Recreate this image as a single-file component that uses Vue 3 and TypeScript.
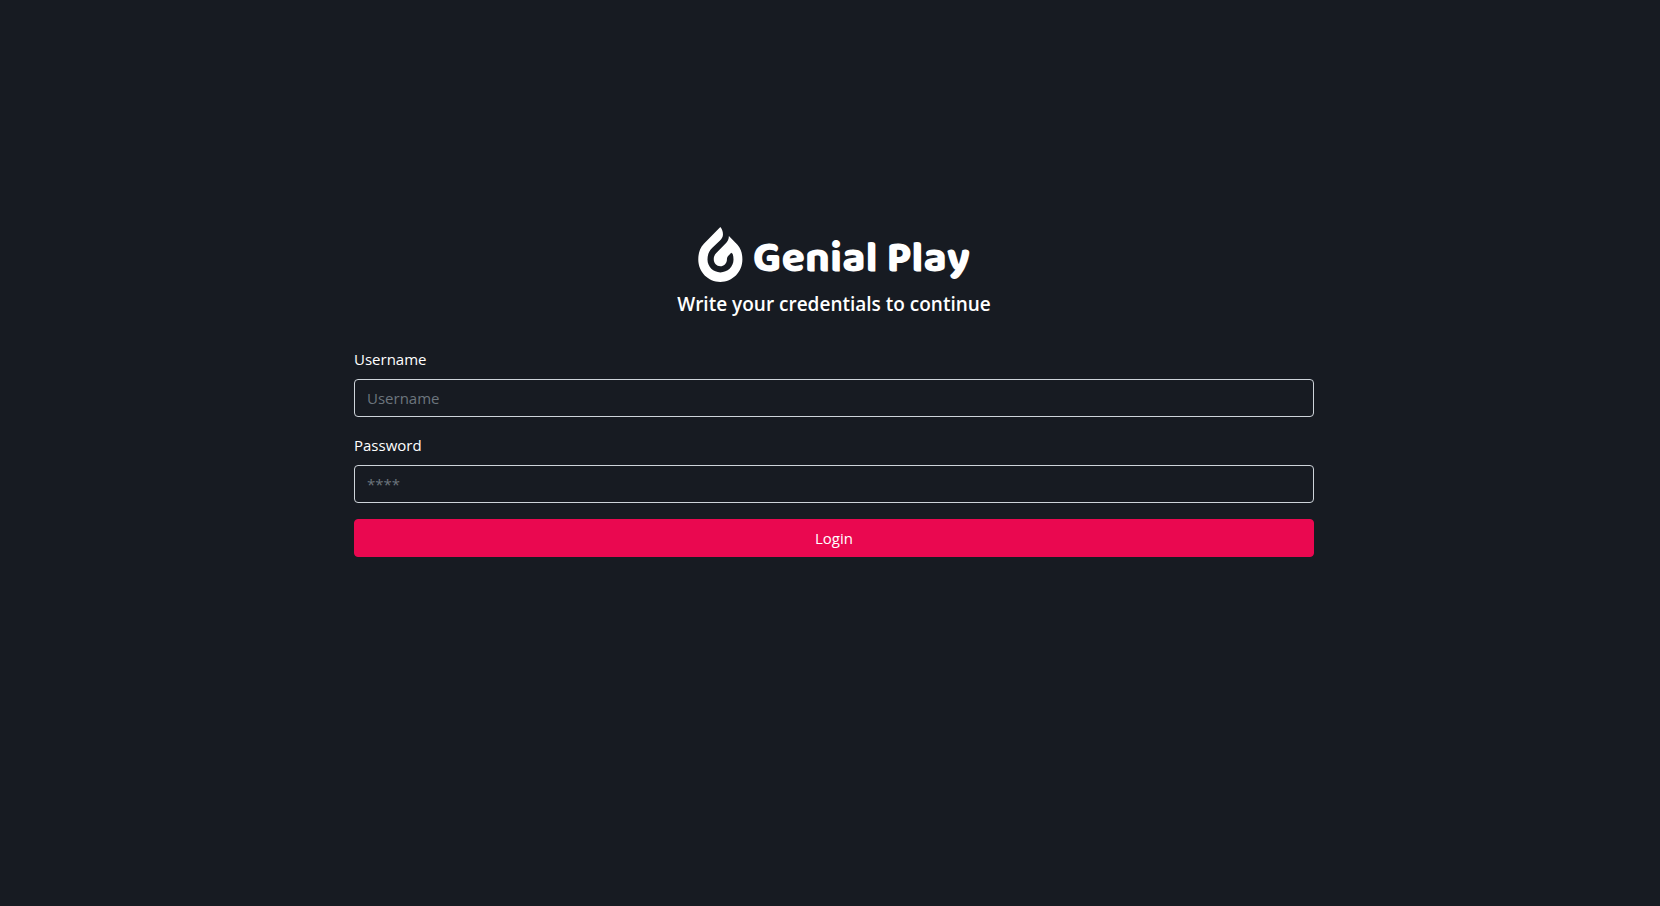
<script setup lang="ts">
import { ref } from 'vue'

const username = ref('')
const password = ref('')
</script>

<template>
  <main class="page">
    <section class="login">
      <header class="head">
        <div class="brand">
          <svg class="flame" viewBox="24 20 135 167" aria-hidden="true">
            <path
              d="M91 20C97 27 99 35 99 43C99 50 95 56 90 61L66 84C56 94 52 105 52 119C52 141 70 158 91 158C113 158 131 141 131 119C131 112 130 106 128 101L124 98L114 109C111 113 111 117 111 120C110 131 102 139 91 139C80 139 71 130 71 118C71 111 73 105 78 100L107 70C113 64 117 57 117 47L143 74C154 86 158 102 158 119C158 157 128 187 91 187C54 187 24 157 24 119C24 101 28 85 41 71Z"
            />
          </svg>
          <span class="wordmark">Genial Play</span>
        </div>
        <h1 class="title">Write your credentials to continue</h1>
      </header>
      <form class="form" @submit.prevent>
        <div class="field">
          <label for="username">Username</label>
          <input id="username" v-model="username" type="text" placeholder="Username" />
        </div>
        <div class="field">
          <label for="password">Password</label>
          <input id="password" v-model="password" type="password" placeholder="****" />
        </div>
        <button type="submit">Login</button>
      </form>
    </section>
  </main>
</template>

<style>
body {
  margin: 0;
  background: #171b22;
}
</style>

<style scoped>
.page {
  box-sizing: border-box;
  min-height: 100vh;
  padding: 0 0 122px 8px;
  display: flex;
  align-items: center;
  justify-content: center;
  background: #171b22;
  color: #fff;
  font-family: "Segoe UI", "Open Sans", "Noto Sans", sans-serif;
  font-size: 15px;
  line-height: 24px;
}
.login {
  width: 100%;
  max-width: 960px;
}
.head {
  display: flex;
  flex-direction: column;
  align-items: center;
  margin-bottom: 31px;
}
.brand {
  display: flex;
  align-items: center;
  gap: 10px;
  height: 55px;
}
.flame {
  width: 45px;
  height: 55px;
  fill: #fff;
}
.wordmark {
  font-family: "Baloo 2", "Open Sans", sans-serif;
  font-size: 43px;
  font-weight: 800;
  line-height: 55px;
  padding-top: 10px;
  white-space: nowrap;
}
.title {
  margin: 10px 0 0;
  font-size: 19px;
  font-weight: 600;
  line-height: 24px;
}
.form {
  display: flex;
  flex-direction: column;
  gap: 16px;
}
.field {
  display: flex;
  flex-direction: column;
  align-items: stretch;
  gap: 8px;
}
.field label {
  align-self: flex-start;
}
input,
button {
  box-sizing: border-box;
  width: 100%;
  height: 38px;
  margin: 0;
  padding: 6px 12px;
  border-radius: 4px;
  font: inherit;
  color: #fff;
}
input {
  border: 1px solid #ced4da;
  background: transparent;
}
input::placeholder {
  color: #6c757d;
  opacity: 1;
}
button {
  border: 1px solid #ea0850;
  background: #ea0850;
  cursor: pointer;
}
</style>
